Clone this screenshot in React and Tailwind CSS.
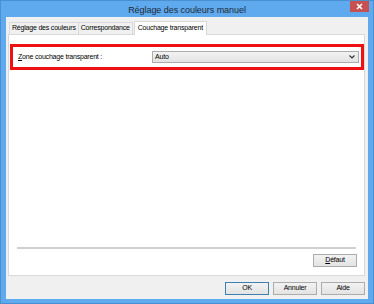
import React from "react";

const font = { fontFamily: '"Liberation Sans", Arial, sans-serif' };
const small = "text-[7px] tracking-[-0.2px]";

function Btn({ children, def }) {
  return (
    <div
      className={`w-[44px] h-[13px] flex items-center justify-center ${small} text-black border ${def ? "border-[#3c7fb1]" : "border-[#acacac]"} bg-gradient-to-b from-[#f2f2f2] to-[#e3e3e3]`}
    >
      {children}
    </div>
  );
}

export default function App() {
  return (
    <div
      className="w-[374px] h-[304px] bg-[#5fa9ee] border border-[#4a8fd0] flex flex-col overflow-hidden"
      style={font}
    >
      {/* title bar */}
      <div className="relative h-[16px] shrink-0 flex items-center justify-center">
        <span className="text-[9px] tracking-[-0.05px] text-[#1e2a38] leading-none mt-[3px]">Réglage des couleurs manuel</span>
        <div className="absolute right-[4px] top-0 w-[19px] h-[11px] bg-[#c75050] flex items-center justify-center">
          <svg width="7" height="7" viewBox="0 0 7 7">
            <path d="M1 1L6 6M6 1L1 6" stroke="#fff" strokeWidth="1.6" />
          </svg>
        </div>
      </div>
      {/* client */}
      <div className="flex-1 mx-[5px] mb-[4px] bg-[#f0f0f0] flex flex-col">
        {/* tabs */}
        <div className="flex items-end pl-[3px] pt-[4px] h-[17px] shrink-0">
          <div className={`h-[12px] px-[2px] flex items-center border border-b-0 border-[#d9d9d9] bg-[#f0f0f0] ${small} text-black`}>Réglage des couleurs</div>
          <div className={`h-[12px] px-[2px] flex items-center border border-b-0 border-l-0 border-[#d9d9d9] bg-[#f0f0f0] ${small} text-black`}>Correspondance</div>
          <div className={`relative z-10 -mb-px h-[14px] px-[3px] ml-[1px] flex items-center border border-b-0 border-[#d9d9d9] bg-white ${small} text-black`}>Couchage transparent</div>
        </div>
        {/* panel */}
        <div className="ml-[2px] mr-[3px] h-[242px] border border-[#d9d9d9] bg-white flex flex-col">
          <div className="mt-[9px] ml-[1px] h-[26px] border-[3px] border-[#ee1111] flex items-center pl-[5px] pr-[2px]">
            <span className={`${small} text-black w-[134px]`}><span className="underline">Z</span>one couchage transparent :</span>
            <div className="flex-1 h-[12px] border border-[#acacac] bg-gradient-to-b from-[#f2f2f2] to-[#e3e3e3] flex items-center justify-between pl-[2px] pr-[3px]">
              <span className={`${small} text-black`}>Auto</span>
              <svg width="6" height="4" viewBox="0 0 6 4">
                <path d="M0.5 0.5L3 3L5.5 0.5" stroke="#333" strokeWidth="1.2" fill="none" />
              </svg>
            </div>
          </div>
          <div className="flex-1" />
          <div className="mx-[8px] h-[2px] bg-[#d0d0d0]" />
          <div className="flex justify-end pr-[7px] mt-[5px] mb-[8px]">
            <Btn><span><span className="underline">D</span>éfaut</span></Btn>
          </div>
        </div>
        {/* buttons */}
        <div className="flex justify-end gap-[4px] pr-[3px] mt-[6px]">
          <Btn def>OK</Btn>
          <Btn>Annuler</Btn>
          <Btn>Aide</Btn>
        </div>
      </div>
    </div>
  );
}
